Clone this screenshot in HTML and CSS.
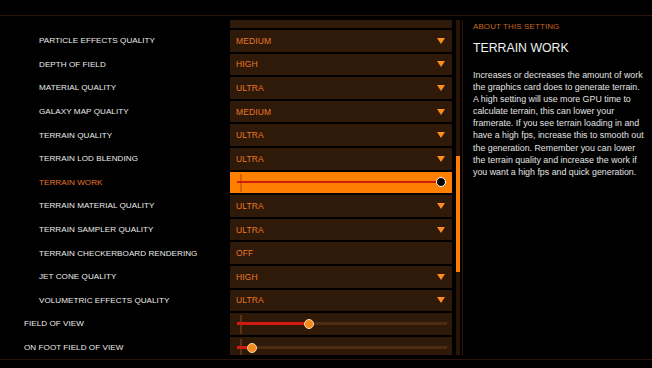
FILE: index.html
```html
<!DOCTYPE html>
<html>
<head>
<meta charset="utf-8">
<link rel="stylesheet" href="styles.css">
</head>
<body>
<div class="screen">
  <div class="topbar"></div>
  <div class="main">
    <div class="list-clip">
      <div class="list">
        <div class="row"><div class="label"></div><div class="box"></div></div>
        <div class="row"><div class="label">PARTICLE EFFECTS QUALITY</div><div class="box"><span class="val">MEDIUM</span><svg class="arrow" width="8" height="6" viewBox="0 0 8 6"><polygon points="0,0 8,0 4,6"/></svg></div></div>
        <div class="row"><div class="label">DEPTH OF FIELD</div><div class="box"><span class="val">HIGH</span><svg class="arrow" width="8" height="6" viewBox="0 0 8 6"><polygon points="0,0 8,0 4,6"/></svg></div></div>
        <div class="row"><div class="label">MATERIAL QUALITY</div><div class="box"><span class="val">ULTRA</span><svg class="arrow" width="8" height="6" viewBox="0 0 8 6"><polygon points="0,0 8,0 4,6"/></svg></div></div>
        <div class="row"><div class="label">GALAXY MAP QUALITY</div><div class="box"><span class="val">MEDIUM</span><svg class="arrow" width="8" height="6" viewBox="0 0 8 6"><polygon points="0,0 8,0 4,6"/></svg></div></div>
        <div class="row"><div class="label">TERRAIN QUALITY</div><div class="box"><span class="val">ULTRA</span><svg class="arrow" width="8" height="6" viewBox="0 0 8 6"><polygon points="0,0 8,0 4,6"/></svg></div></div>
        <div class="row"><div class="label">TERRAIN LOD BLENDING</div><div class="box"><span class="val">ULTRA</span><svg class="arrow" width="8" height="6" viewBox="0 0 8 6"><polygon points="0,0 8,0 4,6"/></svg></div></div>
        <div class="row active"><div class="label">TERRAIN WORK</div><div class="box slider-box"><span class="tick"></span><div class="track work-track"><div class="fill" style="width:100%"></div><span class="knob knob-dark" style="left:100%"></span></div></div></div>
        <div class="row"><div class="label">TERRAIN MATERIAL QUALITY</div><div class="box"><span class="val">ULTRA</span><svg class="arrow" width="8" height="6" viewBox="0 0 8 6"><polygon points="0,0 8,0 4,6"/></svg></div></div>
        <div class="row"><div class="label">TERRAIN SAMPLER QUALITY</div><div class="box"><span class="val">ULTRA</span><svg class="arrow" width="8" height="6" viewBox="0 0 8 6"><polygon points="0,0 8,0 4,6"/></svg></div></div>
        <div class="row"><div class="label">TERRAIN CHECKERBOARD RENDERING</div><div class="box"><span class="val">OFF</span></div></div>
        <div class="row"><div class="label">JET CONE QUALITY</div><div class="box"><span class="val">HIGH</span><svg class="arrow" width="8" height="6" viewBox="0 0 8 6"><polygon points="0,0 8,0 4,6"/></svg></div></div>
        <div class="row"><div class="label">VOLUMETRIC EFFECTS QUALITY</div><div class="box"><span class="val">ULTRA</span><svg class="arrow" width="8" height="6" viewBox="0 0 8 6"><polygon points="0,0 8,0 4,6"/></svg></div></div>
        <div class="row outer"><div class="label">FIELD OF VIEW</div><div class="box slider-box fov"><span class="tick"></span><div class="track"><div class="fill" style="width:34.5%"></div><span class="knob" style="left:34.5%"></span></div></div></div>
        <div class="row outer"><div class="label">ON FOOT FIELD OF VIEW</div><div class="box slider-box fov"><span class="tick"></span><div class="track"><div class="fill" style="width:7%"></div><span class="knob" style="left:7%"></span></div></div></div>
      </div>
    </div>
    <div class="scrollbar"><div class="thumb"></div></div>
    <div class="divider"></div>
    <div class="info">
      <div class="info-kicker">ABOUT THIS SETTING</div>
      <div class="info-title">TERRAIN WORK</div>
      <p class="info-text">Increases or decreases the amount of work<br>the graphics card does to generate terrain.<br>A high setting will use more GPU time to<br>calculate terrain, this can lower your<br>framerate. If you see terrain loading in and<br>have a high fps, increase this to smooth out<br>the generation. Remember you can lower<br>the terrain quality and increase the work if<br>you want a high fps and quick generation.</p>
    </div>
  </div>
  <div class="bottombar"></div>
</div>
</body>
</html>
```
FILE: styles.css
```css
* { box-sizing: border-box; }
html, body {
  margin: 0;
  padding: 0;
  background: #000;
  width: 652px;
  height: 368px;
  overflow: hidden;
  font-family: "Liberation Sans", Arial, sans-serif;
}
.screen {
  display: flex;
  flex-direction: column;
  height: 368px;
}
.topbar {
  height: 16px;
  border-bottom: 1px solid #2c140a;
  flex: none;
}
.main {
  margin-top: 4px;
  height: 335px;
  display: flex;
  flex: none;
}
.list-clip {
  width: 452px;
  height: 335px;
  overflow: hidden;
  flex: none;
}
.list {
  margin-top: -13.6px;
  display: flex;
  flex-direction: column;
  gap: 2px;
}
.row {
  display: grid;
  grid-template-columns: 230px 222px;
  height: 21.6px;
  align-items: center;
}
.label {
  padding-left: 39px;
  font-size: 8.1px;
  color: #ececec;
  letter-spacing: 0.05px;
  white-space: nowrap;
}
.row.outer .label { padding-left: 24px; }
.row.active .label { color: #e8742c; }
.box {
  height: 21.6px;
  background: #2f1908;
  display: flex;
  align-items: center;
  justify-content: space-between;
  padding: 0 7px 0 6px;
  position: relative;
}
.val {
  font-size: 8.5px;
  color: #e8782a;
  letter-spacing: 0.1px;
}
.arrow {
  fill: #ff8c1e;
  display: block;
}
.row.active .box { background: #ff7f00; }
.slider-box { padding: 0 11px 0 7px; }
.fov { padding: 0 5px 0 7px; }
.tick {
  position: absolute;
  left: 10px;
  top: 2px;
  bottom: 1px;
  width: 1.5px;
  background: #5c3414;
}
.row.active .tick { background: #d86400; }
.track {
  position: relative;
  flex: 1;
  height: 3px;
  background: #4e2c10;
}
.work-track { height: 2px; background: #d8200c; }
.fill {
  height: 100%;
  background: #d01c10;
}
.knob {
  position: absolute;
  top: 50%;
  width: 10px;
  height: 10px;
  margin: -5px 0 0 -5px;
  border-radius: 50%;
  background: #f68a1c;
  border: 1px solid #ffd9b0;
}
.knob-dark {
  background: #000;
  border: 1px solid #fff;
}
.scrollbar {
  margin-left: 4px;
  width: 4px;
  height: 335px;
  background: #2a1406;
  flex: none;
}
.thumb {
  margin-top: 136px;
  height: 116px;
  background: #ff7f00;
}
.divider {
  margin-left: 2px;
  width: 1px;
  height: 335px;
  background: #2e160a;
  flex: none;
}
.info {
  padding-left: 10px;
  padding-top: 2px;
}
.info-kicker {
  font-size: 8px;
  line-height: 10px;
  color: #c8661e;
  letter-spacing: 0.1px;
}
.info-title {
  margin-top: 9px;
  font-size: 12.3px;
  line-height: 14px;
  color: #f0f0f0;
}
.info-text {
  margin: 14px 0 0;
  font-size: 8.85px;
  line-height: 12.1px;
  color: #e2e2e2;
  white-space: nowrap;
}
.bottombar {
  height: 5px;
  border-bottom: 1px solid #2c140a;
  flex: none;
}
```
